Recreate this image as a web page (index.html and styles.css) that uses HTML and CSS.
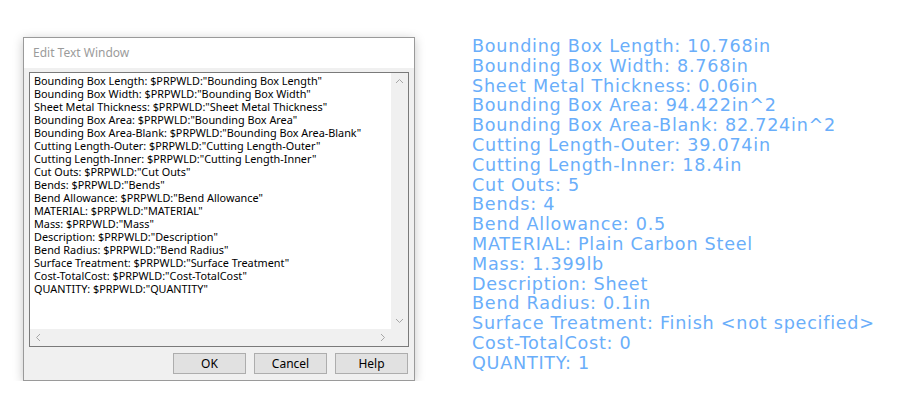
FILE: index.html
```html
<!DOCTYPE html>
<html>
<head>
<meta charset="utf-8">
<link rel="stylesheet" href="styles.css">
</head>
<body>
<div class="page">
  <div class="dialog">
    <div class="titlebar">Edit Text Window</div>
    <div class="dbody">
      <div class="textbox">
        <div class="content">
          <div class="lines">
            <div>Bounding Box Length: $PRPWLD:"Bounding Box Length"</div>
            <div>Bounding Box Width: $PRPWLD:"Bounding Box Width"</div>
            <div>Sheet Metal Thickness: $PRPWLD:"Sheet Metal Thickness"</div>
            <div>Bounding Box Area: $PRPWLD:"Bounding Box Area"</div>
            <div>Bounding Box Area-Blank: $PRPWLD:"Bounding Box Area-Blank"</div>
            <div>Cutting Length-Outer: $PRPWLD:"Cutting Length-Outer"</div>
            <div>Cutting Length-Inner: $PRPWLD:"Cutting Length-Inner"</div>
            <div>Cut Outs: $PRPWLD:"Cut Outs"</div>
            <div>Bends: $PRPWLD:"Bends"</div>
            <div>Bend Allowance: $PRPWLD:"Bend Allowance"</div>
            <div>MATERIAL: $PRPWLD:"MATERIAL"</div>
            <div>Mass: $PRPWLD:"Mass"</div>
            <div>Description: $PRPWLD:"Description"</div>
            <div>Bend Radius: $PRPWLD:"Bend Radius"</div>
            <div>Surface Treatment: $PRPWLD:"Surface Treatment"</div>
            <div>Cost-TotalCost: $PRPWLD:"Cost-TotalCost"</div>
            <div>QUANTITY: $PRPWLD:"QUANTITY"</div>
          </div>
          <div class="vscroll">
            <svg width="17" height="17" viewBox="0 0 17 17"><path d="M5 10 L8.5 6.5 L12 10" fill="none" stroke="#a6a6a6" stroke-width="1"/></svg>
            <svg width="17" height="17" viewBox="0 0 17 17"><path d="M5 7 L8.5 10.5 L12 7" fill="none" stroke="#a6a6a6" stroke-width="1"/></svg>
          </div>
        </div>
        <div class="hrow">
          <div class="hscroll">
            <svg width="17" height="17" viewBox="0 0 17 17"><path d="M10 5 L6.5 8.5 L10 12" fill="none" stroke="#a6a6a6" stroke-width="1"/></svg>
            <svg width="17" height="17" viewBox="0 0 17 17"><path d="M7 5 L10.5 8.5 L7 12" fill="none" stroke="#a6a6a6" stroke-width="1"/></svg>
          </div>
          <div class="corner"></div>
        </div>
      </div>
      <div class="buttons">
        <div class="btn">OK</div>
        <div class="btn">Cancel</div>
        <div class="btn">Help</div>
      </div>
    </div>
  </div>
  <div class="output">
    <div>Bounding Box Length: 10.768in</div>
    <div>Bounding Box Width: 8.768in</div>
    <div>Sheet Metal Thickness: 0.06in</div>
    <div>Bounding Box Area: 94.422in^2</div>
    <div>Bounding Box Area-Blank: 82.724in^2</div>
    <div>Cutting Length-Outer: 39.074in</div>
    <div>Cutting Length-Inner: 18.4in</div>
    <div>Cut Outs: 5</div>
    <div>Bends: 4</div>
    <div>Bend Allowance: 0.5</div>
    <div>MATERIAL: Plain Carbon Steel</div>
    <div>Mass: 1.399lb</div>
    <div>Description: Sheet</div>
    <div>Bend Radius: 0.1in</div>
    <div>Surface Treatment: Finish &lt;not specified&gt;</div>
    <div>Cost-TotalCost: 0</div>
    <div>QUANTITY: 1</div>
  </div>
</div>
</body>
</html>
```

FILE: styles.css
```css
* { box-sizing: border-box; }
html, body { margin: 0; padding: 0; background: #ffffff; }
.page {
  display: flex;
  align-items: flex-start;
  padding: 37px 0 0 23px;
}
.dialog {
  width: 392px;
  height: 344px;
  border: 1px solid #9a9a9a;
  background: #f0f0f0;
  box-shadow: 0 2px 10px rgba(0,0,0,0.22);
  display: flex;
  flex-direction: column;
  font-family: "Noto Sans", "Liberation Sans", sans-serif;
}
.titlebar {
  height: 30px;
  background: #ffffff;
  color: #9b9b9b;
  font-size: 12px;
  line-height: 30px;
  padding-left: 9px;
}
.dbody {
  flex: 1;
  padding: 4px 5px 6px 5px;
  display: flex;
  flex-direction: column;
}
.textbox {
  width: 380px;
  height: 275px;
  border: 1px solid #7a7a7a;
  background: #ffffff;
  display: flex;
  flex-direction: column;
}
.content {
  flex: 1;
  display: flex;
  min-height: 0;
}
.lines {
  flex: 1;
  padding: 1px 0 0 4px;
  font-size: 10.85px;
  line-height: 13px;
  color: #000000;
  white-space: nowrap;
  overflow: hidden;
}
.lines div { height: 13px; }
.vscroll {
  width: 17px;
  background: #f0f0f0;
  display: flex;
  flex-direction: column;
  justify-content: space-between;
}
.vscroll svg, .hscroll svg { display: block; }
.hrow {
  height: 17px;
  display: flex;
}
.hscroll {
  flex: 1;
  background: #f0f0f0;
  display: flex;
  justify-content: space-between;
}
.corner {
  width: 17px;
  background: #f0f0f0;
}
.buttons {
  margin-top: 6px;
  display: flex;
  justify-content: flex-end;
  gap: 8px;
  padding-right: 1px;
}
.btn {
  width: 73px;
  height: 21px;
  border: 1px solid #adadad;
  background: #e1e1e1;
  font-size: 12px;
  line-height: 19px;
  text-align: center;
  color: #000;
}
.output {
  margin-left: 57px;
  margin-top: 0;
  font-family: "DejaVu Sans", sans-serif;
  font-weight: 400;
  font-size: 17.6px;
  letter-spacing: 0.75px;
  line-height: 19.8px;
  color: #6aaefa;
  white-space: nowrap;
}
```
